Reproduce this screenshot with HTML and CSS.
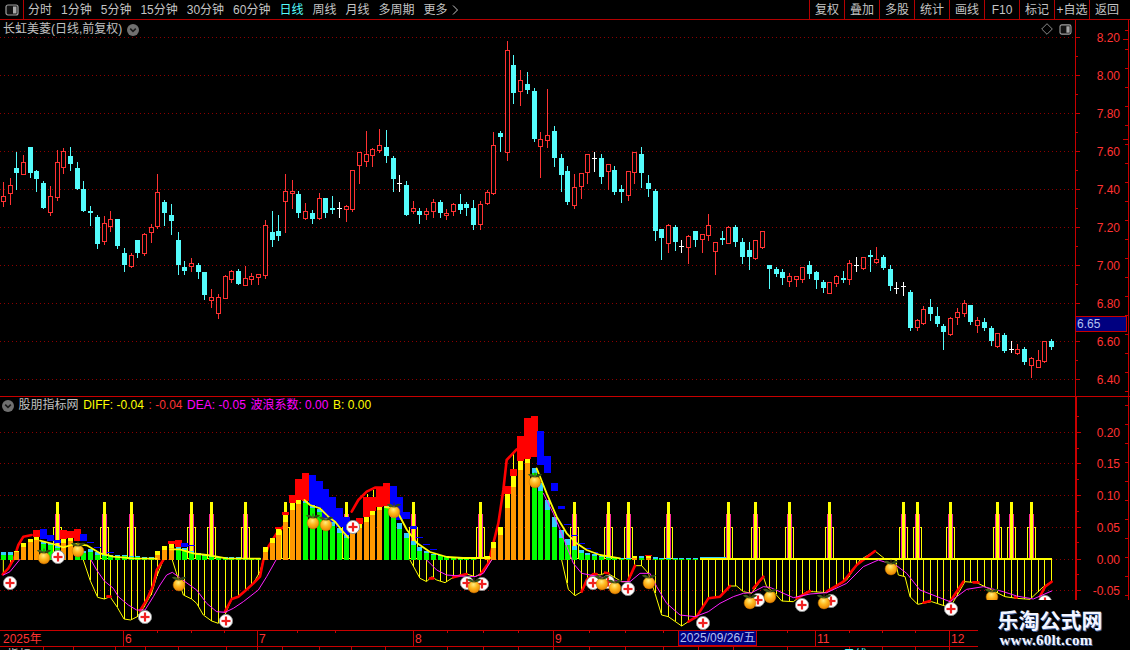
FILE: index.html
```html
<!DOCTYPE html>
<html lang="zh-CN">
<head>
<meta charset="utf-8">
<title>长虹美菱 日线</title>
<link rel="stylesheet" href="styles.css">
</head>
<body>
<div class="app">
  <header class="topbar">
    <div class="side-cell">
      <svg class="panel-icon" viewBox="0 0 14 12"><rect x="1" y="1" width="12" height="10" rx="2" class="ic-frame"/><rect x="8" y="2.5" width="3.5" height="7" class="ic-fill"/></svg>
    </div>
    <nav class="periods">
      <span class="period">分时</span><span class="period">1分钟</span><span class="period">5分钟</span><span class="period">15分钟</span><span class="period">30分钟</span><span class="period">60分钟</span><span class="period active">日线</span><span class="period">周线</span><span class="period">月线</span><span class="period">多周期</span><span class="period">更多 <svg class="chev" viewBox="0 0 6 10"><path d="M1 .5 5.5 5 1 9.5" class="chev-line"/></svg></span>
    </nav>
    <nav class="tools">
      <span class="tool">复权</span><span class="tool">叠加</span><span class="tool">多股</span><span class="tool">统计</span><span class="tool">画线</span><span class="tool">F10</span><span class="tool">标记</span><span class="tool">+自选</span><span class="tool last">返回</span>
    </nav>
  </header>

  <section class="pane price-pane">
    <svg id="price" class="chart" viewBox="0 20 1130 377" width="1130" height="377"></svg>
    <div class="title-row">
      <span class="title-text">长虹美菱(日线,前复权)</span>
      <svg class="round-btn" viewBox="0 0 12 12"><circle cx="6" cy="6" r="6" class="rb-bg"/><path d="M3.2 4.6 6 7.4 8.8 4.6" class="rb-ch"/></svg>
    </div>
    <div class="corner-icons">
      <svg class="diamond" viewBox="0 0 12 12"><path d="M6 .7 11.3 6 6 11.3 .7 6Z" class="ic-line"/></svg>
      <svg class="panel-icon small" viewBox="0 0 14 12"><rect x="1" y="1" width="12" height="10" rx="2" class="ic-frame"/><rect x="8" y="2.5" width="3.5" height="7" class="ic-fill"/></svg>
    </div>
  </section>

  <section class="pane ind-pane">
    <svg id="ind" class="chart" viewBox="0 397 1130 233" width="1130" height="233"></svg>
    <div class="ind-row">
      <svg class="round-btn" viewBox="0 0 12 12"><circle cx="6" cy="6" r="6" class="rb-bg"/><path d="M3.2 4.6 6 7.4 8.8 4.6" class="rb-ch"/></svg>
      <span class="title-text">股朋指标网</span>
      <span class="v-yellow">DIFF: -0.04</span>
      <span class="v-red">: -0.04</span>
      <span class="v-mag">DEA: -0.05</span>
      <span class="v-mag">波浪系数: 0.00</span>
      <span class="v-yellow">B: 0.00</span>
    </div>
  </section>

  <footer class="date-pane">
    <svg id="dates" class="chart" viewBox="0 630 1130 20" width="1130" height="20"></svg>
  </footer>

  <aside class="watermark">
    <div class="wm-cn">乐淘公式网</div>
    <div class="wm-url">www.60lt.com</div>
  </aside>
</div>
<script src="app.js"></script>
</body>
</html>
```
FILE: styles.css
```css
* { box-sizing: border-box; }
html, body { margin: 0; padding: 0; background: #000; }
body { font-family: "Liberation Sans", "Noto Sans CJK SC", sans-serif; font-size: 12px; color: #c4c4c4; }
.app { position: relative; width: 1130px; height: 650px; overflow: hidden; background: #000; display: flex; flex-direction: column; }

.topbar { height: 20px; display: flex; align-items: stretch; border-bottom: 1px solid #b40000; flex: none; }
.side-cell { width: 24px; border-right: 1px solid #b40000; display: flex; align-items: center; justify-content: center; }
.panel-icon { width: 14px; height: 12px; display: block; }
.panel-icon.small { width: 13px; height: 11px; }
.ic-frame { fill: #111; stroke: #a0a0a0; stroke-width: 1.2; }
.ic-fill { fill: #a8a8a8; }
.ic-line { fill: none; stroke: #8a8a8a; stroke-width: 1; }
.periods { display: flex; align-items: flex-start; gap: 9px; padding: 1px 0 0 4px; line-height: 19px; }
.period { white-space: nowrap; }
.period.active { color: #54fcfc; }
.chev { width: 6px; height: 10px; display: inline-block; vertical-align: -1px; margin-left: 1px; }
.chev-line { fill: none; stroke: #c4c4c4; stroke-width: 1; }
.tools { display: flex; margin-left: auto; line-height: 19px; }
.tool { width: 35px; height: 19px; padding-top: 1px; border-left: 1px solid #b40000; text-align: center; white-space: nowrap; overflow: visible; }
.tool.last { width: 41px; padding-right: 6px; }

.pane { position: relative; flex: none; }
.price-pane { height: 377px; border-bottom: 1px solid #c80000; }
.ind-pane { height: 233px; }
.date-pane { height: 20px; flex: none; }
.chart { display: block; }
.title-row { position: absolute; left: 3px; top: 2px; display: flex; align-items: center; gap: 5px; line-height: 15px; }
.title-text { color: #c0c0c0; }
.round-btn { width: 12px; height: 12px; display: block; }
.rb-bg { fill: #707070; }
.rb-ch { fill: none; stroke: #1a1a1a; stroke-width: 1.6; }
.corner-icons { position: absolute; left: 1041px; top: 3px; display: flex; align-items: center; gap: 6px; }
.diamond { width: 12px; height: 12px; display: block; }
.ind-row { position: absolute; left: 2px; top: 1px; display: flex; align-items: center; gap: 4.6px; line-height: 15px; white-space: nowrap; }
.v-yellow { color: #ffff00; }
.v-red { color: #ff3232; }
.v-mag { color: #ff00ff; }

.axis-text { font-size: 12px; fill: #ff3232; text-anchor: end; }
.date-text { font-size: 12px; fill: #ff3232; }
.date-hl-text { font-size: 12px; fill: #b4c0f0; }
.date-hl { fill: #000080; stroke: #c80000; stroke-width: 1; }
.tag-text { font-size: 12px; fill: #b4c0f0; }
.crop-text { font-size: 12px; fill: #c0c0c0; }
.crop-text.cy { fill: #54fcfc; }
.crisp { shape-rendering: crispEdges; }

.watermark { position: absolute; left: 978px; top: 600px; width: 152px; height: 50px; background: #000; display: flex; flex-direction: column; align-items: center; padding: 7px 8px 0 0; }
.wm-cn { font-family: "Noto Sans CJK SC", sans-serif; font-weight: 700; font-size: 21px; line-height: 24px; color: #f4f6ff; text-shadow: 1px 1px 0 #3a5a9a; }
.wm-url { font-family: "Liberation Serif", serif; font-weight: 700; font-size: 15px; line-height: 16px; margin: 1px 8px 0 0; letter-spacing: .25px; color: #f4f6ff; text-shadow: 1px 1px 0 #3a5a9a; }
```
FILE: app.js
```js
(function () {
  var NS = 'http://www.w3.org/2000/svg';
  var RED = '#ff3232', CY = '#54fcfc', YEL = '#ffff00', LINE = '#c80000', GRID = '#8c0000';

  function el(p, tag, a, txt) {
    var e = document.createElementNS(NS, tag);
    for (var k in a) e.setAttribute(k, a[k]);
    if (txt != null) e.textContent = txt;
    p.appendChild(e);
    return e;
  }
  function rect(p, x, y, w, h, f) { return el(p, 'rect', { x: x, y: y, width: w, height: h, fill: f }); }

  /* ---------- candles: [x, high, top, bottom, low, type], in 3x crop coords ---------- */
  var groups = [
    { ox: 0, oy: 130, d: [
      [10,155,198,212,228,'r'],[31,144,166,188,222,'r'],[49,66,114,129,177,'c'],[70,75,97,131,131,'r'],[91,51,51,129,141,'c'],
      [109,120,123,147,183,'c'],[130,153,159,234,234,'c'],[151,168,199,245,255,'r'],[172,60,97,200,209,'r'],[190,54,64,110,128,'r'],
      [211,51,78,102,120,'c'],[232,96,114,177,177,'c'],[250,153,177,243,243,'c'],[271,228,243,249,285,'c'],[292,255,261,342,354,'c'],
      [313,258,280,332,342,'r'],[331,243,268,288,303,'r'],[352,267,267,348,354,'c'],[373,354,369,405,423,'c'],[394,369,376,407,411,'r'],
      [412,330,330,369,381,'c'],[433,309,313,369,375,'r'],[454,282,292,305,336,'r'],[472,132,187,288,294,'r'],[493,210,216,249,285,'c'],
      [514,222,255,273,312,'c'],[535,306,330,405,432,'c'],[553,393,411,423,432,'c'],[574,384,400,408,423,'r'],[595,399,405,426,444,'c'],
      [613,426,426,495,507,'c'],[634,477,502,510,531,'r'],[655,492,502,549,564,'r'],[676,435,439,503,503,'r'],[694,420,424,446,456,'r'],
      [715,417,423,462,462,'c'],[736,408,445,465,465,'r'],[754,429,439,446,462,'r'],[775,432,433,440,462,'r'],[796,270,286,434,444,'r'],
      [817,243,306,330,348,'c'],[835,255,303,318,330,'c'],[856,132,184,213,306,'r'],[877,150,184,188,234,'r'],[895,183,192,249,261,'c'],
      [916,219,244,263,267,'r'],[937,240,249,267,279,'c'],[958,189,205,263,267,'r'],[976,204,204,249,261,'c'],[997,198,234,240,249,'c'],
      [1018,216,234,236,261,'w'],[1039,225,229,236,273,'r'],[1057,120,121,236,243,'r'],[1078,66,67,104,159,'r'],[1099,3,73,92,108,'r'],
      [1117,54,58,74,108,'r'],[1138,-3,46,60,66,'r']
    ]},
    { ox: 380, oy: 30, d: [
      [19,300,351,378,396,'c'],[40,378,384,447,483,'c'],[58,435,459,461,483,'w'],[79,453,465,555,555,'c'],[100,513,535,544,549,'r'],
      [118,534,543,555,579,'c'],[139,534,543,551,567,'r'],[160,507,517,544,561,'r'],[181,510,516,549,561,'c'],[199,537,549,556,567,'r'],
      [220,519,523,542,555,'r'],[241,492,522,540,549,'c'],[259,516,522,534,555,'c'],[280,510,534,585,597,'c'],[301,513,523,581,597,'r'],
      [322,480,487,518,522,'r'],[340,306,346,488,492,'r'],[361,303,309,321,363,'c'],[382,33,61,365,390,'r'],[400,75,105,189,219,'c'],
      [421,120,151,182,225,'r'],[442,126,162,180,189,'c'],[463,174,183,327,333,'c'],[481,306,328,347,441,'r'],[502,177,316,329,351,'r'],
      [523,288,303,384,408,'c'],[544,372,384,435,483,'c'],[562,408,423,516,522,'c'],[583,432,472,525,534,'r'],[604,430,430,468,504,'r'],
      [622,372,373,425,459,'r'],[643,366,384,386,423,'w'],[664,372,384,441,459,'c'],[685,403,403,422,477,'r'],[703,408,420,486,492,'c'],
      [724,465,477,486,516,'c'],[745,424,424,494,510,'r'],[763,366,367,425,459,'r'],[784,351,372,429,471,'c'],[805,435,459,477,498,'c'],
      [826,477,483,603,630,'c'],[844,597,597,624,687,'c'],[865,582,586,638,666,'r'],[886,585,591,636,660,'c'],[904,630,648,650,666,'w'],
      [925,615,619,650,699,'r'],[946,603,603,630,648,'c'],[967,613,613,626,666,'r'],[985,552,586,614,630,'r'],[1006,636,637,662,732,'r'],
      [1027,603,624,630,642,'c'],[1045,588,592,638,640,'r'],[1066,585,591,636,648,'c'],[1087,624,636,681,699,'c'],[1108,636,660,681,717,'c'],
      [1126,630,631,684,687,'r']
    ]},
    { ox: 750, oy: 200, d: [
      [37,92,93,141,143,'r'],[58,195,195,207,264,'c'],[79,201,207,222,228,'c'],[97,207,216,234,252,'c'],[118,219,229,243,258,'r'],
      [139,228,229,236,258,'r'],[157,201,201,236,246,'r'],[178,183,195,222,234,'c'],[199,213,216,240,264,'c'],[220,240,246,264,276,'c'],
      [238,245,246,278,278,'r'],[259,225,229,248,258,'r'],[280,213,234,240,246,'c'],[298,180,190,237,252,'r'],[319,171,195,197,213,'w'],
      [340,171,172,205,207,'r'],[361,150,165,171,213,'c'],[379,141,178,186,189,'r'],[400,165,171,204,207,'c'],[421,195,207,258,270,'c'],
      [439,246,264,266,279,'w'],[460,246,258,260,285,'w'],[481,270,276,384,390,'c'],[502,357,361,381,390,'r'],[520,318,328,370,372,'r'],
      [541,297,321,342,360,'c'],[562,321,348,372,378,'c'],[580,372,378,396,447,'c'],[601,351,355,402,405,'r'],[622,324,337,350,372,'r'],
      [643,300,310,338,348,'r'],[661,315,315,366,372,'c'],[682,351,361,374,396,'r'],[703,354,366,384,390,'c'],[724,378,384,423,435,'c'],
      [742,399,400,438,441,'r'],[763,399,405,453,456,'c'],[784,423,447,449,456,'w'],[802,432,448,458,462,'r'],[823,441,447,486,492,'c'],
      [844,471,475,494,531,'r'],[865,450,481,501,502,'r'],[883,423,424,483,486,'r'],[904,417,423,441,447,'c']
    ]}
  ];

  var price = document.getElementById('price');
  var ind = document.getElementById('ind');
  var dates = document.getElementById('dates');
  var cxs = [];

  function hgrid(svg, y) {
    el(svg, 'line', { x1: 0, x2: 1075, y1: y + 0.5, y2: y + 0.5, stroke: GRID, 'stroke-dasharray': '1 3', class: 'crisp' });
  }
  function axisFrame(svg, top, h, strong) {
    rect(svg, 1075, top, strong ? 2 : 1, h, LINE).setAttribute('class', 'crisp');
    rect(svg, 1128, top, 1, h, LINE).setAttribute('class', 'crisp');
  }

  /* price pane */
  [[37,'8.20'],[75,'8.00'],[113,'7.80'],[151,'7.60'],[189,'7.40'],[227,'7.20'],[265,'7.00'],[303,'6.80'],[341,'6.60'],[379,'6.40']].forEach(function (r) {
    hgrid(price, r[0]);
    rect(price, 1075, r[0], 5, 1, LINE).setAttribute('class', 'crisp');
    el(price, 'text', { x: 1120, y: r[0] + 5, class: 'axis-text' }, r[1]);
  });
  for (var ty = 56; ty < 396; ty += 38) rect(price, 1075, ty, 3, 1, LINE).setAttribute('class', 'crisp');
  for (var ry = 30; ry < 396; ry += 19) rect(price, 1125, ry, 4, 1, LINE).setAttribute('class', 'crisp');
  rect(price, 1123, 39, 6, 1, LINE);
  rect(price, 1123, 139, 6, 1, LINE);
  axisFrame(price, 20, 376, false);

  var cg = el(price, 'g', { class: 'crisp' });
  groups.forEach(function (g) {
    g.d.forEach(function (c) {
      var cx = Math.floor(g.ox + c[0] / 3);
      var Y = function (v) { return Math.round(g.oy + v / 3); };
      var hi = Y(c[1]), top = Y(c[2]), bot = Y(c[3]), lo = Y(c[4]), t = c[5];
      cxs.push(cx);
      if (t === 'c') {
        rect(cg, cx, hi, 1, lo - hi + 1, CY);
        rect(cg, cx - 2, top, 5, Math.max(bot - top, 1), CY);
      } else if (t === 'w') {
        rect(cg, cx, hi, 1, lo - hi + 1, '#fff');
        rect(cg, cx - 2, top, 5, 1, '#fff');
      } else {
        if (top > hi) rect(cg, cx, hi, 1, top - hi, RED);
        if (lo > bot) rect(cg, cx, bot, 1, lo - bot + 1, RED);
        el(cg, 'rect', { x: cx - 2 + 0.5, y: top + 0.5, width: 4, height: Math.max(bot - top, 1), fill: '#000', stroke: RED });
      }
    });
  });
  /* price tag */
  el(price, 'rect', { x: 1075.5, y: 316.5, width: 51, height: 15, fill: '#000080', stroke: LINE, class: 'crisp' });
  el(price, 'text', { x: 1077, y: 328, class: 'tag-text' }, '6.65');

  /* ---------- indicator pane ---------- */
  function snap(x) {
    var best = cxs[0];
    cxs.forEach(function (c) { if (Math.abs(c - x) < Math.abs(best - x)) best = c; });
    return best;
  }
  function pts(ox, oy, arr) {
    var out = [];
    for (var i = 0; i < arr.length; i += 2) out.push([ox + arr[i] / 3, oy + arr[i + 1] / 3]);
    return out;
  }
  function poly(p, list, color, w) {
    return el(p, 'polyline', { points: list.map(function (q) { return q.join(','); }).join(' '), fill: 'none', stroke: color, 'stroke-width': w, 'stroke-linejoin': 'round', 'stroke-linecap': 'round' });
  }

  [[432,'0.20'],[463,'0.15'],[495,'0.10'],[527,'0.05'],[559,'0.00'],[590,'-0.05']].forEach(function (r) {
    hgrid(ind, r[0]);
    rect(ind, 1076, r[0], 5, 1, LINE).setAttribute('class', 'crisp');
    el(ind, 'text', { x: 1120, y: r[0] + 5, class: 'axis-text' }, r[1]);
  });
  for (var ty2 = 416; ty2 < 630; ty2 += 31.5) rect(ind, 1076, Math.round(ty2), 3, 1, LINE).setAttribute('class', 'crisp');
  for (var ry2 = 405; ry2 < 630; ry2 += 19) rect(ind, 1125, ry2, 4, 1, LINE).setAttribute('class', 'crisp');
  axisFrame(ind, 397, 233, true);

  /* lower yellow curve (DIFF) */
  var lowY = [
    pts(0, 520, [10,120,10,160,25,145,42,120]),
    pts(0, 520, [250,120,270,180,293,232,313,237,330,230,352,262,372,297,392,300,412,290,430,265,455,220,470,170,490,120]),
    pts(0, 520, [517,120,550,225,575,237,590,250,610,285,635,303,655,310,677,280,695,237,715,230,735,213,760,190,780,155,790,120]),
    pts(380, 400, [90,480,120,535,140,545,155,530,170,540,195,548,215,535,240,525,260,522,285,530,305,520,335,480]),
    pts(380, 400, [545,480,565,568,585,587,605,575,620,540,640,522,660,525,680,518,700,530,725,545,745,545,765,497,785,497,805,520,825,580,845,645,865,650,905,678,925,665,950,650,985,595,1020,590,1050,558,1070,558,1090,575,1115,580]).concat(
      pts(750, 490, [40,260,50,290,75,310,95,333,130,335,170,305,190,305,230,308,290,270,330,210,375,183,405,207])),
    pts(750, 490, [435,207,445,255,465,260,480,320,503,343,545,335,600,353,645,275,680,278,715,295,765,320,800,325,840,328,880,290,905,275])
  ];
  function curveY(x) {
    for (var s = 0; s < lowY.length; s++) {
      var L = lowY[s];
      for (var i = 0; i < L.length - 1; i++) {
        if (x >= L[i][0] && x <= L[i + 1][0]) {
          var f = (x - L[i][0]) / ((L[i + 1][0] - L[i][0]) || 1);
          return L[i][1] + f * (L[i + 1][1] - L[i][1]);
        }
      }
    }
    return null;
  }

  /* signal spikes sit beneath the histogram */
  var spikeG = el(ind, 'g', { class: 'crisp' });
  [57,104,131,191,211,245,285,346,413,480,574,608,628,668,728,755,789,829,903,917,950,997,1011,1031].forEach(function (x) {
    el(spikeG, 'rect', { x: x - 4 + 0.5, y: 527.5, width: 8, height: 31, fill: 'none', stroke: YEL });
    rect(spikeG, x - 2, 514, 5, 45, '#ff2aa0');
    rect(spikeG, x - 1, 502, 3, 57, YEL);
  });

  var hang = el(ind, 'g', { class: 'crisp' });
  cxs.forEach(function (cx) {
    if (cx > 1052) return;
    var y = curveY(cx);
    if (y !== null && y > 560) rect(hang, cx, 559, 1, y - 559, YEL);
  });
  rect(hang, 1051, 559, 1, 24, YEL);
  lowY.forEach(function (L) { poly(ind, L, YEL, 1); });

  /* small positive hanging lines in the arcs */
  [[367,494,520],[373,490,512],[513,452,470],[303,500,516]].forEach(function (v) { rect(hang, v[0], v[1], 1, v[2] - v[1], YEL); });

  /* bars: [x, kind, bodyTop, capTop, upperColour, upperTop, upperBottom] */
  var bars = [
    [3,'g',555,552],[10,'g',555,552],[16,'o',552,551],[23,'o',547,543],[30,'o',542,539],[36,'o',540,537,'r',530,537],
    [43,'g',544,542,'b',529,539],[50,'g',545,543,'b',535,541],[57,'g',548,546,'b',540,543],[63,'o',543,539,'r',530,539],[70,'o',541,538,'r',531,538],
    [77,'g',553,550,'r',529,541],[83,'g',553,551,'b',534,541],[90,'g',552,549,'b',542,543],[97,'g',555,552,'b',547,548],[104,'g',556,554],[110,'g',556,555,'b',552,553],
    [117,'g',556,555],[124,'g',556,555],[131,'g',557,556],[137,'g',557,556],[144,'g',558,557],[151,'g',558,557],
    [157,'o',555,551],[164,'o',550,546],[171,'o',548,544,'r',541,544],[178,'g',549,547,'r',540,547],[184,'g',550,548,'b',543,547],[191,'g',553,551,'b',545,546],
    [198,'g',555,553],[204,'g',556,554],[211,'g',557,555],[218,'g',558,557],[225,'g',558,557],[231,'g',558,557],[238,'g',558,557],[245,'g',559,558],[251,'g',559,558],[258,'g',559,558],
    [265,'o',552,547],[272,'o',543,538],[278,'o',535,529,'r',527,529],[285,'o',522,515,'r',512,515],[292,'o',510,503,'r',495,503],[299,'o',504,500,'r',479,500],
    [306,'g',503,501,'r',473,501],[313,'g',508,505,'b',475,505],[319,'g',512,509,'b',481,508],[326,'g',522,518,'b',489,518],[333,'g',526,522,'b',497,522],
    [339,'g',533,528,'b',508,527],[346,'g',538,535,'b',517,535],[353,'o',530,526,'r',522,526],[360,'o',528,524,'r',518,524],[366,'o',522,517,'r',497,517],
    [373,'o',515,511,'r',497,511],[379,'o',510,507,'r',488,507],[386,'g',508,506,'r',483,506],[393,'g',518,515,'b',486,515],[400,'g',529,523,'b',497,520],
    [406,'g',538,533,'b',512,519],[413,'g',545,541,'b',526,529],[420,'g',551,547,'b',537,538],[426,'g',553,551,'b',544,545],[433,'g',555,554,'b',549,550],
    [440,'g',556,555],[447,'g',557,556],[453,'g',558,557],[460,'g',559,558],[467,'g',559,558],[473,'g',559,558],
    [487,'o',558,556],[493,'o',548,542],[500,'o',535,527],[507,'o',508,494,'r',486,494],[514,'o',487,476,'r',469,476],[521,'o',470,461,'r',436,461],[527,'o',463,459,'r',418,459],
    [534,'g',473,468,'r',416,457],[541,'g',491,483,'b',431,465],[548,'g',510,500,'b',456,473],[554,'g',527,517,'b',483,491],[561,'g',538,530,'b',506,509],
    [568,'g',545,539,'b',524,525],[574,'g',550,546,'b',535,536],[581,'g',553,550,'b',543,544],[588,'g',555,553,'b',548,549],[595,'g',556,554,'b',552,553],
    [601,'g',557,556],[608,'g',558,557],[615,'g',558,557],[622,'g',559,558],[628,'g',559,558],[635,'o',558,556],[641,'g',558,556],[648,'o',558,556,'r',555,556],
    [655,'g',559,557],[662,'g',559,558],[668,'g',559,558],[675,'g',559,558],[682,'g',559,558],[689,'g',559,558],[695,'g',559,558]
  ];
  var C = { r: '#ff0000', b: '#0000ff' };
  var upperG = el(ind, 'g', { class: 'crisp' });
  bars.forEach(function (b) {
    if (b[4]) { var cx = snap(b[0]); rect(upperG, cx - 3, b[5], 7, b[6] - b[5], C[b[4]]); }
  });

  /* thick red line: below the bars */
  var redG = el(ind, 'g', {});
  [
    pts(0, 520, [8,163,25,145,42,115,55,75,70,50,95,45]),
    pts(0, 520, [420,272,440,240,460,195,470,150,490,120]),
    pts(0, 520, [322,229,332,230]),
    pts(0, 520, [675,275,695,237,715,230,735,213,760,190,780,170,790,120,805,80,830,40,860,10]),
    pts(260, 465, [275,140,295,105,320,80,345,68,370,68]),
    pts(380, 400, [150,535,160,535]), pts(380, 400, [220,532,260,522]),
    pts(380, 400, [300,525,325,490,340,430,355,370,370,270,380,180,410,148]),
    pts(380, 400, [605,575,620,540,640,522,650,522]), pts(380, 400, [675,518,685,520]), pts(380, 400, [745,540,765,497]),
    pts(380, 400, [925,665,950,650,985,595,1020,590,1050,558]),
    pts(750, 490, [10,295,40,260]), pts(750, 490, [140,325,180,303]), pts(750, 490, [230,305,280,275,320,225,375,183]),
    pts(750, 490, [520,338,540,333]), pts(750, 490, [600,335,640,275]), pts(750, 490, [670,277,685,277]),
    pts(750, 490, [795,322,800,323]), pts(750, 490, [870,320,885,290,905,275])
  ].forEach(function (L) { poly(redG, L, '#ff0000', 2.6); });

  var barG = el(ind, 'g', { class: 'crisp' });
  bars.forEach(function (b) {
    var cx = snap(b[0]), isG = b[1] === 'g';
    var bx = cx - 2.3, bw = 5.67;
    rect(barG, bx, b[2], bw, 560 - b[2], isG ? '#00ff00' : '#ff9900');
    rect(barG, bx, b[3], bw, b[2] - b[3], isG ? '#33ccff' : '#ffff00');
  });
  /* thin cyan floor */
  rect(barG, 700, 557, 26, 1, '#33ccff');

  /* zero baseline and positive yellow line */
  rect(ind, 700, 558, 352, 2, YEL).setAttribute('class', 'crisp');
  [
    pts(0, 520, [120,62,160,72,190,82,225,72,260,76,300,100,340,110,400,115,470,116]),
    pts(0, 520, [510,88,540,88,580,100,620,105,680,115,780,116]),
    pts(260, 465, [133,105,150,120,180,130,205,155,225,170,245,195,265,218]),
    [[385,507],[392,508],[398,513],[407,530],[417,543],[430,552],[447,557],[463,558],[490,558]],
    pts(380, 400, [470,205,500,280,530,350,560,400,590,430,620,450,660,465,720,475])
  ].forEach(function (L) { poly(ind, L, YEL, 1.8); });

  /* DEA */
  [
    pts(0, 520, [10,165,30,155,60,118]),
    pts(0, 520, [273,120,290,150,313,183,340,205,355,230,385,255,410,270,435,270,460,230,480,195,500,165,517,157,555,185,590,210,620,250,650,275,675,277,700,265,730,245,775,210,800,170,828,120]),
    pts(380, 400, [140,480,170,510,200,525,240,528,285,530,310,520,335,480]),
    pts(380, 400, [490,280,520,340,545,400,580,490,605,520,630,525,660,530,690,540,725,545,750,545,780,520,810,520,830,560,860,610,900,645,945,650,985,635,1020,610,1060,590,1090,580,1115,578]).concat(
      pts(750, 490, [40,290,60,292,130,323,180,312,230,308,290,280,340,230,385,210,440,227,470,250,510,300,600,335,650,298,700,290,760,305,800,318,850,327,905,303]))
  ].forEach(function (L) { poly(ind, L, '#ff20ff', 1); });

  /* markers */
  var defs = el(ind, 'defs', {});
  var grad = el(defs, 'radialGradient', { id: 'fruitGrad', cx: '0.45', cy: '0.3', r: '0.72' });
  el(grad, 'stop', { offset: '0', 'stop-color': '#ffee80' });
  el(grad, 'stop', { offset: '0.45', 'stop-color': '#ffba20' });
  el(grad, 'stop', { offset: '1', 'stop-color': '#e88000' });

  function plus(x, y) {
    var g = el(ind, 'g', { transform: 'translate(' + x + ',' + y + ')' });
    el(g, 'circle', { r: 6.6, fill: '#fff', stroke: '#8c8c8c', 'stroke-width': 1 });
    rect(g, -4.5, -1.1, 9, 2.2, '#f02020');
    rect(g, -1.1, -4.5, 2.2, 9, '#f02020');
  }
  function fruit(x, y) {
    var g = el(ind, 'g', { transform: 'translate(' + x + ',' + y + ')' });
    el(g, 'circle', { r: 5.9, fill: 'url(#fruitGrad)', stroke: '#c07000', 'stroke-width': 0.5 });
    el(g, 'path', { d: 'M0-4.6C-1.5-8-4-9-7.2-7.6-5.2-5.6-2.6-4.6 0-4.6Z', fill: '#3f5a1c' });
    el(g, 'path', { d: 'M0-4.6C1.5-8 4-9 7.2-7.6 5.2-5.6 2.6-4.6 0-4.6Z', fill: '#2d4614' });
    el(g, 'path', { d: 'M0-9.4V-5', stroke: '#4a3a18', 'stroke-width': 1, fill: 'none' });
  }
  [[10,583],[58,557],[145,617],[226,621],[353,527],[467,583],[482,584],[593,583],[608,582],[628,589],[703,623],[758,600],[802,605],[831,601],[951,609],[1045,602]].forEach(function (m) { plus(m[0], m[1]); });
  [[44,558],[78,551],[179,585],[313,523],[326,525],[394,512],[535,482],[474,587],[602,584],[615,588],[649,583],[750,603],[770,597],[824,603],[891,569],[992,597]].forEach(function (m) { fruit(m[0], m[1]); });

  /* ---------- date axis ---------- */
  var dg = el(dates, 'g', { class: 'crisp' });
  rect(dg, 0, 630, 1130, 1, LINE);
  rect(dg, 0, 646, 1130, 1, LINE);
  [123,257,413,553,815,949].forEach(function (x) { rect(dg, x, 630, 1, 16, LINE); });
  [157,191,224,297,335,447,483,518,589,625,663,698,733,787,849,882,915,985].forEach(function (x) { rect(dg, x, 631, 1, 2, LINE); });
  [43,73,115,145,178,226,257,282,319,351,385,447,483,518,553,589,625,663,698,733,787,849,882,915,949].forEach(function (x) { rect(dg, x, 647, 1, 3, LINE); });
  [[3,'2025年'],[125,'6'],[259,'7'],[415,'8'],[555,'9'],[817,'11'],[951,'12']].forEach(function (d) {
    el(dates, 'text', { x: d[0], y: 643, class: 'date-text' }, d[1]);
  });
  el(dates, 'rect', { x: 678.5, y: 630.5, width: 78, height: 15, class: 'date-hl crisp' });
  el(dates, 'text', { x: 680, y: 642, class: 'date-hl-text' }, '2025/09/26/五');
  el(dates, 'text', { x: 7, y: 659, class: 'crop-text' }, '指标');
  el(dates, 'text', { x: 843, y: 659, class: 'crop-text cy' }, '日线');
})();
```
